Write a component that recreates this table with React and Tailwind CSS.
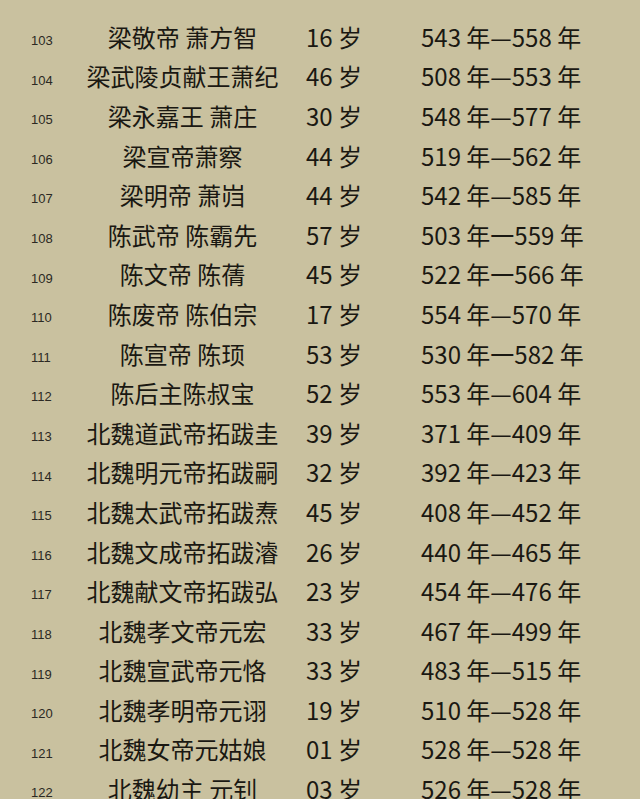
const rows = [
  ['103', '梁敬帝 萧方智', '16 岁', '543 年—558 年'],
  ['104', '梁武陵贞献王萧纪', '46 岁', '508 年—553 年'],
  ['105', '梁永嘉王 萧庄', '30 岁', '548 年—577 年'],
  ['106', '梁宣帝萧察', '44 岁', '519 年—562 年'],
  ['107', '梁明帝 萧岿', '44 岁', '542 年—585 年'],
  ['108', '陈武帝 陈霸先', '57 岁', '503 年一559 年'],
  ['109', '陈文帝 陈蒨', '45 岁', '522 年一566 年'],
  ['110', '陈废帝 陈伯宗', '17 岁', '554 年—570 年'],
  ['111', '陈宣帝 陈顼', '53 岁', '530 年一582 年'],
  ['112', '陈后主陈叔宝', '52 岁', '553 年—604 年'],
  ['113', '北魏道武帝拓跋圭', '39 岁', '371 年—409 年'],
  ['114', '北魏明元帝拓跋嗣', '32 岁', '392 年—423 年'],
  ['115', '北魏太武帝拓跋焘', '45 岁', '408 年—452 年'],
  ['116', '北魏文成帝拓跋濬', '26 岁', '440 年—465 年'],
  ['117', '北魏献文帝拓跋弘', '23 岁', '454 年—476 年'],
  ['118', '北魏孝文帝元宏', '33 岁', '467 年—499 年'],
  ['119', '北魏宣武帝元恪', '33 岁', '483 年—515 年'],
  ['120', '北魏孝明帝元诩', '19 岁', '510 年—528 年'],
  ['121', '北魏女帝元姑娘', '01 岁', '528 年—528 年'],
  ['122', '北魏幼主 元钊', '03 岁', '526 年—528 年'],
];

export default function App() {
  return (
    <div className="h-[799px] w-[640px] overflow-hidden bg-[#c9c19f] pt-[17px] font-['Noto_Sans_CJK_SC',sans-serif] text-[#1a1812]">
      {rows.map(([no, name, age, years]) => (
        <div key={no} className="flex h-[39.6px] items-center">
          <div className="w-[60px] pl-[31px] pt-[8px] font-['Liberation_Sans','Noto_Sans_CJK_SC',sans-serif] text-[13px] text-[#2b2923]">
            {no}
          </div>
          <div className="w-[245px] text-center text-[24px] leading-none">{name}</div>
          <div className="w-[116px] pl-[1px] text-[24px] leading-none">{age}</div>
          <div className="text-[24px] leading-none">{years}</div>
        </div>
      ))}
    </div>
  );
}
